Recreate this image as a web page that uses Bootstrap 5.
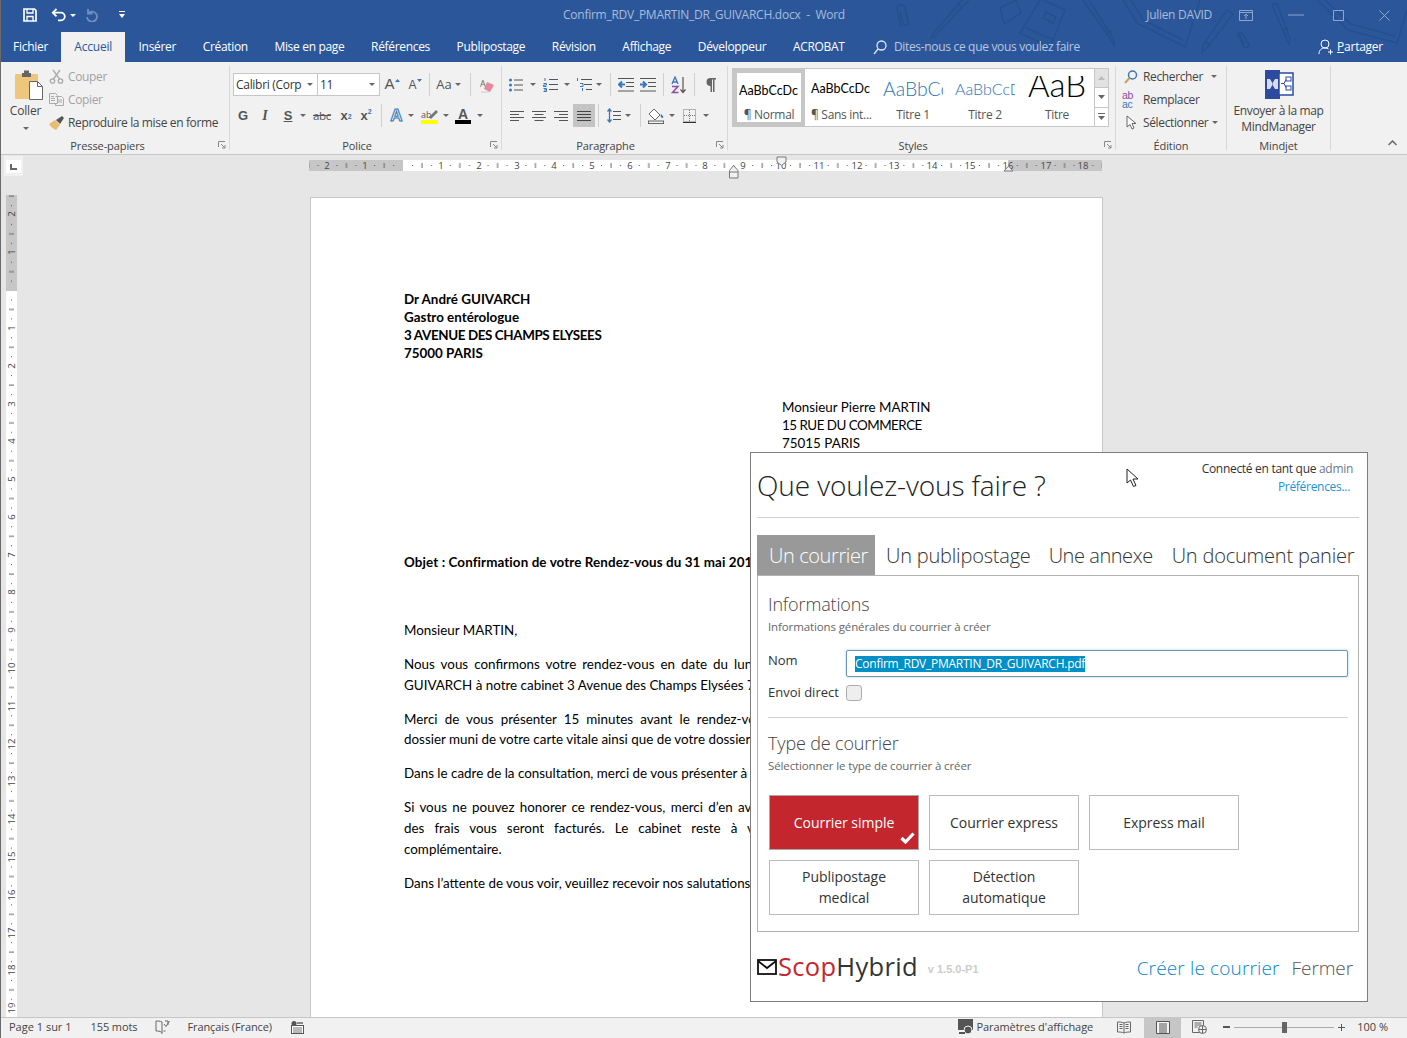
<!DOCTYPE html>
<html lang="fr"><head><meta charset="utf-8"><title>Word</title>
<link href="https://cdn.jsdelivr.net/npm/bootstrap@5.3.0/dist/css/bootstrap.min.css" rel="stylesheet">
<style>
html,body{margin:0;height:100%;overflow:hidden}
body{font-family:"Open Sans","Liberation Sans",sans-serif;font-size:11.5px;color:#444;background:#e6e6e6}
.app{width:1407px;height:1038px;border-left:1px solid #6a6a6a;position:relative;overflow:hidden}
.head{height:62px;background:#2b579a;position:relative;color:#fff}
.doodle{position:absolute;left:890px;top:0;width:516px;height:62px}
.tbar{height:30px;margin-bottom:2px;display:grid;grid-template-columns:1fr auto 1fr;align-items:center;position:relative}
.qat{padding-left:22px;gap:0}
.qu{margin-left:14px}.qr{margin-left:8px}.qc{margin-left:21px}
.wtitle{color:#a9bcd8;font-size:12px;letter-spacing:-.26px}
.wctl{color:#a9bcd8;font-size:12px}
.ntabs{height:30px;position:relative;flex-wrap:nowrap;align-items:stretch}
.ntabs .nav-link{color:#fff;font-size:12px;letter-spacing:-.32px;padding:5px 13.3px 0;height:30px;line-height:19px;border-radius:0;white-space:nowrap}
.ntabs .nav-link.first{padding:5px 13px 0 12px;letter-spacing:-.25px}
.ntabs .nav-link.active{background:#f1f1f1;color:#2b579a;padding:5px 13px 0;letter-spacing:-.2px;width:64px}
.tell{color:#b9c8e0;font-size:12px;letter-spacing:-.32px;margin-left:15px;gap:7px}
.share{margin-left:auto;margin-right:24px;font-size:12px;letter-spacing:-.25px;gap:4px;color:#fff}
.ribbon{height:93px;background:#f1f1f1;border-bottom:1px solid #c6c6c6;padding-top:4px;display:flex}
.rg{height:84px;border-right:1px solid #d8d8d8;display:flex;flex-direction:column;position:relative;flex:none}
.rb{height:73px;display:flex}
.rl{height:11px;line-height:14px;text-align:center;font-size:11px;color:#444;letter-spacing:-.1px}
.launch{position:absolute;right:3px;bottom:1px;width:8px;height:8px}
.g1{width:229px}.g2{width:272px}.g3{width:226px}.g4{width:388px}.g5{width:111px}.g6{width:104px}
.coller{width:48px;text-align:center;padding-left:1px;flex:none}
.coller div{line-height:16px;font-size:12px;letter-spacing:-.2px}
.coller svg{margin:3px 0 3px 12px}
.stk{margin-top:-1px}
.rb.stk{height:74px}
.cmd{height:23px;display:flex;align-items:center;white-space:nowrap;font-size:12px;letter-spacing:-.36px}
.cmd svg{flex:none}
.off{color:#a3a3a3}
.rows2{padding-top:7px;display:block}
.row1,.row2{height:23px;display:flex;align-items:center}
.row2{margin-top:8px}
.sl{display:flex;align-items:center;justify-content:center;flex:none;height:23px}
.sl svg{flex:none}
.car{width:0;height:0;border-left:3px solid transparent;border-right:3px solid transparent;border-top:3px solid #666;display:inline-block;flex:none}
.sep{width:1px;height:23px;background:#d0d0d0;display:block;flex:none}
.combo{height:23px;background:#fff;border:1px solid #c6c6c6;display:flex;align-items:center;justify-content:space-between;padding:0 4px 0 2px;font-size:12px;letter-spacing:-.3px;flex:none}
.w84{width:85px}.w62{width:63px;margin-left:-1px}
.w1{width:1px}.w2{width:2px}.w4{width:4px}.w6{width:6px}.w7{width:7px}.w8{width:8px}.w12{width:12px}.w14{width:14px}.w17{width:17px}.w18{width:18px}.w20{width:20px}.w22{width:22px}.w23{width:23px}.w24{width:24px}.w25{width:25px}.w26{width:26px}.w28{width:28px}.w30{width:30px}.w32{width:32px}
.ltr{font-family:"Liberation Sans",sans-serif;font-weight:700;color:#555;font-size:13px}
.ltr sub,.ltr sup{font-size:7px;color:#3a77b8}
.hl{background:#c4c4c4}
.gal{height:59px;display:flex;margin:2px 0 0 4px;background:#fff;border:1px solid #c6c6c6;width:377px;flex:none}
.gi{width:72px;flex:none;overflow:hidden;text-align:center;padding:0 6px;height:57px}
.gi.sel{outline:4px solid #c6c6c6;outline-offset:-4px;width:72px;padding-top:6px}
.smp{height:36px;margin-top:2px;display:flex;align-items:center;justify-content:flex-start;white-space:nowrap;overflow:hidden;font-family:Lato,sans-serif;color:#000;font-size:12.5px;width:60px}
.sel .smp{height:32px;margin-top:0}
.gl{font-size:12px;letter-spacing:-.3px;color:#555;line-height:14px;margin-top:1px;white-space:nowrap}
.smp.t1{color:#2e74b5;font-size:19.4px;font-weight:300}.smp.t2{color:#2e74b5;font-size:16px;font-weight:300}
.smp.t0{display:block;font-size:33px;font-weight:300;margin:7px 0 0 0;height:31px}
.t0 span{display:block;line-height:36px;margin-top:-10px}
.scr{width:14px;flex:none;margin-left:auto;border-left:1px solid #c6c6c6;background:#f1f1f1;display:flex;flex-direction:column}
.scr div{flex:1;border-bottom:1px solid #c6c6c6;background:#fff;display:flex;align-items:center;justify-content:center}
.scr div:first-child{background:#e2e2e2}
.scr div:last-child{border-bottom:0}
.work{height:862px;display:flex;flex-direction:column;background:#e6e6e6}
.rrow{height:40px;display:flex;flex:none}
.tabbox{width:19px;height:20px;margin:1px 0 0 3px;background:#f1f1f1;padding:4px 2px 2px;flex:none}
.tabbox div{background:#fff;height:13px;display:flex;align-items:center;justify-content:center}
.hrul{margin-left:286px;flex:none}
.wrow{flex:1;display:flex;overflow:hidden}
.vrul{margin-left:5px;flex:none}
.page{width:793px;margin:2px 0 0 293px;background:#fff;border:1px solid #c6c6c6;border-bottom:0;padding:92px 93px 0;font-family:Lato,"Liberation Sans",sans-serif;font-size:13.4px;color:#000;flex:none;height:900px}
.ad{line-height:18px;margin:0}
.caps{letter-spacing:-.38px}.caps2{letter-spacing:-.5px}
.dest{margin:36px 0 0 378px;line-height:18px}
.obj{margin-top:101px;font-weight:700;line-height:18px;white-space:nowrap;letter-spacing:.1px}
.par{line-height:20.9px;margin:12.9px 0 0}
.par div{text-align:justify;text-align-last:justify}
.par div.e{text-align-last:left;white-space:nowrap}
.dlg{position:absolute;left:749px;top:452px;width:618px;height:550px;background:#fff;border:1px solid #7d7d7d;padding:0 8px 0 6px;color:#333;z-index:5}
.dt{font-weight:300;font-size:28px;color:#222;line-height:36px;letter-spacing:-.1px;margin-top:-2px}
.dh{height:65px;border-bottom:1px solid #d0d0d0;display:flex;justify-content:space-between;padding:16px 0 0 0}
.who{font-size:12px;line-height:18px;text-align:right;padding-right:6px;margin-top:-9px;color:#333;letter-spacing:-.3px}
.who a{color:#6c7a89;text-decoration:none}.who a.p{color:#1a94d6;margin-right:3px}
.dtabs{margin-top:17px;flex-wrap:nowrap;height:40px;border:0}
.dtabs .nav-link{font-size:20px;font-weight:300;color:#333;padding:0 9px;line-height:41px;height:40px;border-radius:0;white-space:nowrap;letter-spacing:-.2px}
.dtabs .nav-link.active{background:#999;color:#fff;padding:0 0 0 12px;width:118px;margin-right:2px;letter-spacing:-.4px}
.dtabs .nav-link.ann{letter-spacing:-.45px;padding-right:10px}
.panel{border:1px solid #b3b3b3;height:357px;padding:0 10px}
.sh{font-weight:300;font-size:18px;color:#444;line-height:24px;margin:0;letter-spacing:-.15px;box-sizing:content-box}
.sh.a{padding-top:16px}.sh.b{padding-top:13px}
.ss{font-size:11.5px;color:#666;line-height:16px;letter-spacing:-.12px;font-weight:400;margin-top:3px}
.frow{display:flex;align-items:center;font-size:13px;color:#333;letter-spacing:0}
.fr1{margin-top:15px}.fr2{margin-top:6px}
.fl{width:78px;flex:none;white-space:nowrap}
.fr1 .fl{margin-top:-6px}
.nom{height:27px;width:502px;border:1px solid #6f95ad;border-radius:2px;box-shadow:0 0 3px #9fd8f0;padding:0 0 0 8px;display:flex;align-items:center;font-size:12px;background:#fff;color:#fff}
.nom span{background:#0090c8;line-height:16px;letter-spacing:-.25px}
.chk{width:16px;height:16px;margin:0;background:#eee;border:1px solid #aaa;border-radius:2px;flex:none}
.sep2{border-top:1px solid #d0d0d0;opacity:1;margin:14px 0 0}
.tiles{display:grid;grid-template-columns:repeat(3,150px);grid-auto-rows:55px;gap:10px;padding-left:1px;margin-top:21px}
.tiles .btn{border:1px solid #bbb;border-radius:0;background:#fff;color:#333;font-size:14px;line-height:21px;padding:0 10px;letter-spacing:-.05px;position:relative;display:flex;align-items:center;justify-content:center}
.tiles .btn.on{background:#c4262e;color:#fff;border-color:#a8a8a8}
.tick{position:absolute;right:3px;bottom:5px}
.dfoot{display:flex;align-items:center;height:69px}
.logo{font-size:25.5px;line-height:30px;font-weight:500;color:#333;margin:-2px 0 0 1px;letter-spacing:.3px}
.logo b{color:#c4262e;font-weight:500}
.ver{font-family:"Liberation Sans",sans-serif;font-weight:700;font-size:11px;color:#ccc;margin-left:10px;margin-top:5px}
.acts{margin-left:auto;font-size:19px;font-weight:300;padding:3px 6px 0 0;letter-spacing:-.15px}
.acts a{text-decoration:none;color:#0a86d0;letter-spacing:.15px}.acts a.f{color:#555;margin-left:12px;letter-spacing:-.1px}
.status{height:21px;background:#f1f1f1;border-top:1px solid #c6c6c6;display:flex;align-items:center;font-size:11px;color:#444;position:relative;padding:0 0 2px 8px}
.status .m{white-space:nowrap;flex:none}
.vw{width:37px;height:21px;background:#c6c6c6;display:flex;align-items:center;justify-content:center;margin:0 11px 0 13px}
.st2{margin-left:19px;letter-spacing:-.1px}.st3{margin-left:18px}.st4{margin-left:17px;letter-spacing:-.1px}.st5{margin-left:19px}
.st6{margin-left:auto}.st7{margin-left:1px;letter-spacing:-.06px}.st8{margin-left:24px}
.zm{width:7px;height:2px;background:#555;margin-left:16px;flex:none}
.zs{width:100px;height:1px;background:#aaa;margin-left:4px;flex:none;position:relative}
.zs i{position:absolute;left:48px;top:-5px;width:5px;height:11px;background:#666;display:block}
.st9{margin-left:4px}.st10{margin:0 19px 0 12px}
.cur{position:absolute;left:1125px;top:468px;z-index:6}
</style></head><body>
<div class="app">
<div class="head">
<svg class="doodle" viewBox="0 0 516 62" fill="none" stroke="#23508f" stroke-width="1.5"><path d="M10 27 6 10a4 4 0 0 1 8-2l3 14a2.500 2.500 0 0 1-5 1L9 11"/><path d="M71 0 42 34l-2 4 4-2L78 0M66 3l6 5"/><path d="M109 8l16-8M113 24l17-11-5-13M109 8l4 16"/><path d="M149 0l-20 33 30 14 15-37-22-10M135 28l28 12M155 12l10 5-3 6-10-5z"/><path d="M192 0l28 40 4 6-2-8-24-38M215 34l6-3"/><path d="M232 0l14 23 48 24L309 0M240 0l12 20 40 20"/><path d="M336 10l-24 35-1 7 5-4 26-34zM315 42l5 4"/><path d="M381 5l15 35 2 4 1-5-13-36zM392 30l5-2"/><path d="M346 33l7 14a3 3 0 0 0 5-2l-7-12a2 2 0 0 0-3 1l5 10"/><path d="M426 0l31 30 49 13 10-33M434 0l26 24 44 12"/></svg>
<div class="tbar">
<div class="qat d-flex align-items-center">
<svg width="14" height="14" viewBox="0 0 14 14" fill="none" stroke="#fff" stroke-width="1.7"><path d="M1 1h10.5L13 2.500V13H1z"/><path d="M4 1v4h6V1M4 13V8.500h6V13" stroke-width="1.300"/></svg>
<svg class="qu" width="15" height="14" viewBox="0 0 15 14" fill="none" stroke="#fff" stroke-width="1.8"><path d="M5.500 1 1.800 4.700l3.700 3.700M2 4.700h8a3.700 3.700 0 0 1 0 7.600H7"/></svg>
<span class="car ms-1" style="border-top-color:#fff"></span>
<svg class="qr" width="14" height="14" viewBox="0 0 14 14" fill="none" stroke="#6f8fbf" stroke-width="1.8"><path d="M4 1v4.500h4.500M4.500 5A5 5 0 1 1 3 9"/></svg>
<svg class="qc" width="6" height="8" viewBox="0 0 6 8" fill="#fff"><path d="M0 0h6v1H0zM0 3h6L3 7z"/></svg>
</div>
<div class="wtitle">Confirm_RDV_PMARTIN_DR_GUIVARCH.docx&nbsp; - &nbsp;Word</div>
<div class="wctl d-flex align-items-center justify-content-end">
<span style="margin-right:27px;letter-spacing:-.3px">Julien DAVID</span>
<svg width="14" height="11" viewBox="0 0 14 11" fill="none" stroke="#8fa6ca"><path d="M.5.500h13v10H.5zM.5 2.500h13M7 9V4.500M5 6l2-2 2 2"/></svg>
<svg style="margin-left:35px" width="16" height="2" viewBox="0 0 16 2" stroke="#8fa6ca"><path d="M0 1h16"/></svg>
<svg style="margin-left:29px" width="11" height="11" viewBox="0 0 11 11" fill="none" stroke="#8fa6ca"><path d="M.5.500h10v10H.5z"/></svg>
<svg style="margin:0 17px 0 35px" width="11" height="11" viewBox="0 0 11 11" fill="none" stroke="#8fa6ca"><path d="M.5.500l10 10M10.500.500l-10 10"/></svg>
</div></div>
<ul class="nav ntabs">
<li class="nav-item"><a class="nav-link first" href="#">Fichier</a></li>
<li class="nav-item"><a class="nav-link active" href="#">Accueil</a></li>
<li class="nav-item"><a class="nav-link" href="#">Insérer</a></li>
<li class="nav-item"><a class="nav-link" href="#">Création</a></li>
<li class="nav-item"><a class="nav-link" href="#">Mise en page</a></li>
<li class="nav-item"><a class="nav-link" href="#">Références</a></li>
<li class="nav-item"><a class="nav-link" href="#">Publipostage</a></li>
<li class="nav-item"><a class="nav-link" href="#">Révision</a></li>
<li class="nav-item"><a class="nav-link" href="#">Affichage</a></li>
<li class="nav-item"><a class="nav-link" href="#">Développeur</a></li>
<li class="nav-item"><a class="nav-link" href="#">ACROBAT</a></li>
<li class="tell d-flex align-items-center"><svg width="14" height="15" viewBox="0 0 14 15" fill="none" stroke="#dfe6f2" stroke-width="1.3"><circle cx="8.500" cy="5.500" r="4.500"/><path d="M5 9 1 14"/></svg>Dites-nous ce que vous voulez faire</li>
<li class="share d-flex align-items-center"><svg width="15" height="16" viewBox="0 0 15 16" fill="none" stroke="#fff"><circle cx="7" cy="5" r="4"/><path d="M1 15c0-4 2.500-6 6-6 1.500 0 2.500.3 3.500 1M10 13h5M12.500 10.500v5"/></svg><span><u>P</u>artager</span></li>
</ul>
</div>

<div class="ribbon">
<div class="rg g1">
<div class="rb">
<div class="coller">
<svg width="30" height="31" viewBox="0 0 30 31" class="d-block"><rect x="1" y="5" width="23" height="25" rx="1" fill="#efc77c"/><path d="M8 4h2V1.500h5V4h2v4H8z" fill="#666"/><path d="M15.500 12.500h8l5 5v13h-13z" fill="#fff" stroke="#666"/><path d="M23.500 12.500v5h5" fill="none" stroke="#666"/></svg>
<div>Coller</div><div style="line-height:14px"><span class="car"></span></div>
</div>
<div class="stk">
<div class="cmd off"><svg class="me-1" width="15" height="15" viewBox="0 0 15 15" fill="none" stroke="#aaa" stroke-width="1.300"><circle cx="3.500" cy="12" r="2.200"/><circle cx="11.500" cy="12" r="2.200"/><path d="M4.500 10 11 1M10.500 10 4 1"/></svg>Couper</div>
<div class="cmd off"><svg class="me-1" width="15" height="13" viewBox="0 0 15 13" fill="none" stroke="#aaa"><path d="M.5.500h6l2 2v8h-8zM6.500 3.500h6l2 2v7h-8v-2M2 3.500h3M2 5.500h4M2 7.500h4M8 7h5M8 9h5"/></svg>Copier</div>
<div class="cmd"><svg class="me-1" width="15" height="15" viewBox="0 0 15 15"><path d="M0 9l6-4 5 5-4 5c-3-1-5-3-7-6z" fill="#e7bd72"/><path d="M7 5l4 4 4-6-2-2z" fill="#555"/></svg>Reproduire la mise en forme</div>
</div></div>
<div class="rl" style="padding-right:15px">Presse-papiers</div>
<svg class="launch" viewBox="0 0 8 8" fill="none" stroke="#888"><path d="M.5 6V.500H7M3 3l4 4M7 4v3H4"/></svg>
</div>

<div class="rg g2">
<div class="rb rows2" style="padding-left:3px">
<div class="row1">
<div class="combo w84"><span style="color:#333">Calibri (Corp</span><span class="car"></span></div>
<div class="combo w62"><span style="color:#333">11</span><span class="car"></span></div>
<span class="sl w24 ltr" style="font-weight:400;font-size:15px;color:#555">A<svg width="5" height="3" viewBox="0 0 5 3" class="mb-2"><path d="M0 3l2.500-3L5 3z" fill="#3a77b8"/></svg></span>
<span class="sl w22 ltr" style="font-weight:400;font-size:12px;color:#555">A<svg width="5" height="3" viewBox="0 0 5 3" class="mb-2"><path d="M0 0l2.500 3L5 0z" fill="#3a77b8"/></svg></span>
<span class="sl w7"><i class="sep"></i></span>
<span class="sl w22" style="font-size:13px;color:#555">Aa</span>
<span class="sl w6"><span class="car"></span></span>
<span class="sl w18"><i class="sep"></i></span>
<span class="sl w17"><svg width="16" height="16" viewBox="0 0 16 16"><text x="0" y="10" font-size="9" font-family="Open Sans,sans-serif" fill="#666">A</text><path d="M7 5l7 3-4 7-6-3z" fill="#e58a9a"/><path d="M1 15h8" stroke="#ccc"/></svg></span>
</div>
<div class="row2">
<span class="sl w20 ltr">G</span>
<span class="sl w24 ltr" style="font-style:italic;font-family:'Liberation Serif',serif;font-size:14px">I</span>
<span class="sl w22 ltr"><u>S</u></span>
<span class="sl w8"><span class="car"></span></span>
<span class="sl w30" style="font-size:11.500px;color:#555;letter-spacing:-.3px"><s>abc</s></span>
<span class="sl w18 ltr">x<sub>2</sub></span>
<span class="sl w22 ltr">x<sup>2</sup></span>
<span class="sl w8"><i class="sep"></i></span>
<span class="sl w23 ltr" style="color:#dfeaf6;font-size:17px;-webkit-text-stroke:1px #3a77b8">A</span>
<span class="sl w6"><span class="car"></span></span>
<span class="sl w30"><svg width="17" height="16" viewBox="0 0 17 16"><text x="0" y="10" font-size="9" font-family="Open Sans,sans-serif" fill="#555">ab</text><path d="M8 9l7-7 2 2-7 7z" fill="#777"/><rect y="12" width="17" height="4" fill="#ff0"/></svg></span>
<span class="sl w4"><span class="car"></span></span>
<span class="sl w30 flex-column" style="line-height:11px;height:23px;font-family:'Liberation Sans',sans-serif;font-weight:700;font-size:14px;color:#555;padding-top:2px">A<i class="d-block" style="width:16px;height:4px;background:#000"></i></span>
<span class="sl w4"><span class="car"></span></span>
</div></div>
<div class="rl" style="padding-right:17px">Police</div>
<svg class="launch" viewBox="0 0 8 8" fill="none" stroke="#888"><path d="M.5 6V.500H7M3 3l4 4M7 4v3H4"/></svg>
</div>

<div class="rg g3">
<div class="rb rows2" style="padding-left:3px">
<div class="row1">
<span class="sl w22"><svg width="14" height="14" viewBox="0 0 14 14" stroke="#555"><circle cx="1.500" cy="2" r="1.500" fill="#3a77b8" stroke="none"/><circle cx="1.500" cy="7" r="1.500" fill="#3a77b8" stroke="none"/><circle cx="1.500" cy="12" r="1.500" fill="#3a77b8" stroke="none"/><path d="M5 2h9M5 7h9M5 12h9"/></svg></span>
<span class="sl w12"><span class="car"></span></span>
<span class="sl w22"><svg width="15" height="15" viewBox="0 0 15 15" stroke="#555" fill="none"><path d="M6 2.500h9M6 7.500h9M6 12.500h9"/><path d="M2 1v3M.5 6.500h3v1.500h-3v1.500h3M.5 11.500h3v3h-3M1 13h2" stroke="#3a77b8"/></svg></span>
<span class="sl w12"><span class="car"></span></span>
<span class="sl w22"><svg width="16" height="15" viewBox="0 0 16 15" stroke="#555" fill="none"><path d="M5 2.500h11M8 7.500h8M10 12.500h6"/><path d="M1.500 1v3M4 6.500h3v3H4M6.500 11v3" stroke="#3a77b8"/></svg></span>
<span class="sl w8"><span class="car"></span></span>
<span class="sl w14"><i class="sep"></i></span>
<span class="sl w18"><svg width="16" height="14" viewBox="0 0 16 14" stroke="#555" fill="none"><path d="M0 .500h16M8 4.500h8M8 8.500h8M0 13h16"/><path d="M7 6.500H1M4 3.500l-3 3 3 3" stroke="#3a77b8" stroke-width="2"/></svg></span>
<span class="sl w26"><svg width="16" height="14" viewBox="0 0 16 14" stroke="#555" fill="none"><path d="M0 .500h16M8 4.500h8M8 8.500h8M0 13h16"/><path d="M0 6.500h6M3 3.500l3 3-3 3" stroke="#3a77b8" stroke-width="2"/></svg></span>
<span class="sl w4"><i class="sep"></i></span>
<span class="sl w28"><svg width="16" height="18" viewBox="0 0 16 18" fill="none"><path d="M1 8 4 1l3 7M2 6h4" stroke="#3a77b8" stroke-width="1.300"/><path d="M1 10.500h6L1.500 16.500h6" stroke="#8a4fa8" stroke-width="1.500"/><path d="M12 1v15M9.500 13.500 12 16.500l2.500-3" stroke="#555" stroke-width="1.200"/></svg></span>
<span class="sl w2"><i class="sep"></i></span>
<span class="sl w30"><svg width="11" height="14" viewBox="0 0 11 14" fill="#666"><path d="M5 0h6v1.500H9.500V14H8V1.500H7V14H5.500V8a4 4 0 0 1 0-8z"/></svg></span>
</div>
<div class="row2">
<span class="sl w24"><svg width="14" height="10" viewBox="0 0 14 10" stroke="#555"><path d="M0 .500h14M0 3.500h9M0 6.500h14M0 9.500h9"/></svg></span>
<span class="sl w20"><svg width="14" height="10" viewBox="0 0 14 10" stroke="#555"><path d="M0 .500h14M2.500 3.500h9M0 6.500h14M2.500 9.500h9"/></svg></span>
<span class="sl w24"><svg width="14" height="10" viewBox="0 0 14 10" stroke="#555"><path d="M0 .500h14M5 3.500h9M0 6.500h14M5 9.500h9"/></svg></span>
<span class="sl w22 hl"><svg width="14" height="10" viewBox="0 0 14 10" stroke="#444"><path d="M0 .500h14M0 3.500h14M0 6.500h14M0 9.500h14"/></svg></span>
<span class="sl w6"><i class="sep"></i></span>
<span class="sl w25"><svg width="14" height="15" viewBox="0 0 14 15" fill="none"><path d="M6 3.500h8M6 7.500h8M6 11.500h8" stroke="#555"/><path d="M2.500 1v13M.5 3.500l2-2.500 2 2.500M.5 11.500l2 2.500 2-2.500" stroke="#3a77b8" stroke-width="1.300"/></svg></span>
<span class="sl w4"><span class="car"></span></span>
<span class="sl w20"><i class="sep"></i></span>
<span class="sl w12"><svg width="17" height="16" viewBox="0 0 17 16" fill="none" stroke="#666"><path d="M6 1l6 6-5 5-6-6z" fill="#fff"/><path d="M13 6c2 2 3 3 2 4-2 0-3-2-2-4z" fill="#3a77b8" stroke="none"/><rect x=".5" y="13" width="15" height="2.500"/></svg></span>
<span class="sl w20"><span class="car"></span></span>
<span class="sl w14"><svg width="13" height="14" viewBox="0 0 13 14" stroke="#777" stroke-dasharray="1 1" fill="none"><path d="M.5.500h12v12H.5zM6.500 1v11M1 6.500h11"/><path d="M0 13.500h13" stroke="#333" stroke-dasharray="none"/></svg></span>
<span class="sl w20"><span class="car"></span></span>
</div></div>
<div class="rl" style="padding-right:18px">Paragraphe</div>
<svg class="launch" viewBox="0 0 8 8" fill="none" stroke="#888"><path d="M.5 6V.500H7M3 3l4 4M7 4v3H4"/></svg>
</div>

<div class="rg g4">
<div class="rb">
<div class="gal">
<div class="gi sel"><div class="smp">AaBbCcDc</div><div class="gl">¶ Normal</div></div>
<div class="gi"><div class="smp">AaBbCcDc</div><div class="gl">¶ Sans int...</div></div>
<div class="gi"><div class="smp t1">AaBbCc</div><div class="gl">Titre 1</div></div>
<div class="gi"><div class="smp t2">AaBbCcD</div><div class="gl">Titre 2</div></div>
<div class="gi"><div class="smp t0"><span>AaB</span></div><div class="gl">Titre</div></div>
<div class="scr"><div><svg width="7" height="4" viewBox="0 0 7 4" fill="#bbb"><path d="M0 4l3.500-4L7 4z"/></svg></div><div><svg width="7" height="4" viewBox="0 0 7 4" fill="#666"><path d="M0 0l3.500 4L7 0z"/></svg></div><div><svg width="7" height="7" viewBox="0 0 7 7" fill="#666"><path d="M0 0h7v1H0zM0 3h7L3.500 7z"/></svg></div></div>
</div></div>
<div class="rl" style="padding-right:17px">Styles</div>
<svg class="launch" viewBox="0 0 8 8" fill="none" stroke="#888"><path d="M.5 6V.500H7M3 3l4 4M7 4v3H4"/></svg>
</div>

<div class="rg g5">
<div class="rb d-block stk" style="padding-left:8px">
<div class="cmd"><svg style="margin-right:5px" width="14" height="14" viewBox="0 0 14 14" fill="none"><circle cx="8.500" cy="5" r="4" stroke="#3a77b8" stroke-width="1.500"/><path d="M5.500 8 1 13" stroke="#c9a25a" stroke-width="2"/></svg>Rechercher<span class="car ms-2"></span></div>
<div class="cmd"><span style="width:21px;font-size:10.500px;font-family:'Liberation Sans',sans-serif;line-height:8.500px;color:#8a4fa8;letter-spacing:-.3px;margin-left:-2px;display:block;flex:none">ab<br><span style="color:#3a77b8">ac</span></span>Remplacer</div>
<div class="cmd"><svg style="margin:0 5px 0 2px" width="12" height="15" viewBox="0 0 12 15" fill="#fff" stroke="#666"><path d="M1 1v11l3-2.500 2 4.500 2-1-2-4.500h4z"/></svg>Sélectionner<span class="car ms-1"></span></div>
</div>
<div class="rl">Édition</div></div>

<div class="rg g6">
<div class="rb flex-column align-items-center">
<svg width="30" height="30" viewBox="0 0 30 30" class="d-block flex-shrink-0" style="margin-top:3px"><rect x="1" y="1" width="15" height="29" fill="#2c4aa0"/><rect x="15" y="4" width="14" height="22" fill="#fff" stroke="#2c4aa0" stroke-width="1.500"/><path d="M3 10h3l3 5-3 5H3zM14 10h-3l-3 5 3 5h3z" fill="#d8dce8"/><g fill="none" stroke="#2c4aa0"><rect x="22" y="8" width="5" height="4"/><rect x="22" y="17" width="5" height="4"/><path d="M17 14.500h3l2-4M20 14.500l2 4"/></g></svg>
<div class="text-center" style="font-size:12px;line-height:16px;letter-spacing:-.35px;margin-top:4px;white-space:nowrap">Envoyer à la map<br>MindManager</div>
</div>
<div class="rl">Mindjet</div></div>
<div class="ms-auto d-flex align-items-end" style="height:84px;padding:0 10px 4px 0"><svg width="9" height="6" viewBox="0 0 9 6" fill="none" stroke="#666" stroke-width="1.500"><path d="M.5 5l4-4 4 4"/></svg></div>
</div>

<div class="work">
<div class="rrow">
<div class="tabbox"><div><svg width="7" height="6" viewBox="0 0 7 6" fill="#666"><path d="M0 0h2v4h5v2H0z"/></svg></div></div>
<svg class="hrul" width="796" height="26" viewBox="0 0 796 26" font-family="Open Sans,sans-serif" font-size="9.500" fill="#444" text-anchor="middle">
<defs><pattern id="tk" x="18.400" y="0" width="37.800" height="26" patternUnits="userSpaceOnUse"><rect x="9" y="10" width="1" height="1" fill="#555"/><rect x="18.500" y="8" width="1" height="5" fill="#666"/><rect x="28" y="10" width="1" height="1" fill="#555"/></pattern></defs>
<rect x="0" y="5" width="94" height="11" fill="#c6c6c6"/><rect x="94" y="5" width="605" height="11" fill="#fff"/><rect x="699" y="5" width="94" height="11" fill="#c6c6c6"/>
<rect x="0" y="5" width="793" height="11" fill="url(#tk)"/>
<g><text x="18" y="14">2</text><text x="56" y="14">1</text><text x="132" y="14">1</text><text x="170" y="14">2</text><text x="208" y="14">3</text><text x="245" y="14">4</text><text x="283" y="14">5</text><text x="321" y="14">6</text><text x="359" y="14">7</text><text x="396" y="14">8</text><text x="434" y="14">9</text><text x="472" y="14">10</text><text x="510" y="14">11</text><text x="548" y="14">12</text><text x="585" y="14">13</text><text x="623" y="14">14</text><text x="661" y="14">15</text><text x="699" y="14">16</text><text x="737" y="14">17</text><text x="774" y="14">18</text></g>
<path d="M424.500 10.500l-4 5v7.500h8.500v-7.500zM420.500 17h8.500" fill="#f1f1f1" stroke="#777"/>
<path d="M468 2h9v5l-4.500 3.500L468 7z" fill="#f1f1f1" stroke="#777"/>
<path d="M699.500 11l-4.500 5h9z" fill="#f1f1f1" stroke="#777"/>
</svg>
</div>
<div class="wrow">
<svg class="vrul" width="11" height="822" viewBox="0 0 11 822" font-family="Open Sans,sans-serif" font-size="9.500" fill="#444" text-anchor="middle">
<defs><pattern id="vk" x="0" y="19.900" width="11" height="37.800" patternUnits="userSpaceOnUse"><rect x="5" y="9" width="1" height="1" fill="#555"/><rect x="3" y="18.500" width="5" height="1" fill="#666"/><rect x="5" y="28" width="1" height="1" fill="#555"/></pattern></defs>
<rect width="11" height="96" fill="#c6c6c6"/><rect y="96" width="11" height="726" fill="#fff"/>
<rect width="11" height="822" fill="url(#vk)"/>
<g><text transform="translate(9,19) rotate(-90)">2</text><text transform="translate(9,57) rotate(-90)">1</text><text transform="translate(9,133) rotate(-90)">1</text><text transform="translate(9,171) rotate(-90)">2</text><text transform="translate(9,209) rotate(-90)">3</text><text transform="translate(9,246) rotate(-90)">4</text><text transform="translate(9,284) rotate(-90)">5</text><text transform="translate(9,322) rotate(-90)">6</text><text transform="translate(9,360) rotate(-90)">7</text><text transform="translate(9,397) rotate(-90)">8</text><text transform="translate(9,435) rotate(-90)">9</text><text transform="translate(9,473) rotate(-90)">10</text><text transform="translate(9,511) rotate(-90)">11</text><text transform="translate(9,549) rotate(-90)">12</text><text transform="translate(9,586) rotate(-90)">13</text><text transform="translate(9,624) rotate(-90)">14</text><text transform="translate(9,662) rotate(-90)">15</text><text transform="translate(9,700) rotate(-90)">16</text><text transform="translate(9,738) rotate(-90)">17</text><text transform="translate(9,775) rotate(-90)">18</text><text transform="translate(9,813) rotate(-90)">19</text></g>
</svg>
<div class="page">
<p class="ad fw-bold">Dr André GUIVARCH<br>Gastro entérologue<br><span class="caps">3 AVENUE DES CHAMPS ELYSEES</span><br>75000 PARIS</p>
<p class="dest">Monsieur Pierre MARTIN<br><span class="caps2">15 RUE DU COMMERCE</span><br>75015 PARIS</p>
<div class="obj">Objet : Confirmation de votre Rendez-vous du 31 mai 2016</div>
<p class="par" style="margin-top:49px"><span class="d-block">Monsieur MARTIN,</span></p>
<div class="par"><div>Nous vous confirmons votre rendez-vous en date du lundi 31 mai 2016 à 14h30 avec le Docteur</div><div class="e">GUIVARCH à notre cabinet 3 Avenue des Champs Elysées 75000 Paris.</div></div>
<div class="par"><div>Merci de vous présenter 15 minutes avant le rendez-vous pour la constitution de votre dossier,</div><div class="e">dossier muni de votre carte vitale ainsi que de votre dossier médical.</div></div>
<div class="par"><div class="e">Dans le cadre de la consultation, merci de vous présenter à jeun.</div></div>
<div class="par"><div>Si vous ne pouvez honorer ce rendez-vous, merci d’en avertir le cabinet 48 heures à l’avance, sinon</div><div>des frais vous seront facturés. Le cabinet reste à votre disposition pour toute information</div><div class="e">complémentaire.</div></div>
<div class="par"><div class="e">Dans l’attente de vous voir, veuillez recevoir nos salutations distinguées.</div></div>
</div>
</div>
</div>

<div class="status">
<span class="m">Page 1 sur 1</span><span class="m st2">155 mots</span>
<svg class="flex-shrink-0 st3" width="15" height="14" viewBox="0 0 15 14" fill="none" stroke="#666"><path d="M7 2C5 1 3 1 1 1v10c2 0 4 0 6 1.500V2zM7 12.500V14M8.500 11h2M10 1h3v4"/><path d="M9 4l2 2.500L14.500 1" stroke="#666"/></svg>
<span class="m st4">Français (France)</span>
<svg class="flex-shrink-0 st5" width="13" height="13" viewBox="0 0 13 13"><circle cx="3" cy="2.500" r="2.500" fill="#555"/><rect x=".5" y="4.500" width="12" height="8" fill="#fff" stroke="#555"/><path d="M2 7h9M2 9h9M2 11h9" stroke="#777"/><path d="M6 1h6v2H6z" fill="#888"/></svg>
<svg class="flex-shrink-0 st6" width="17" height="16" viewBox="0 0 17 16"><rect y="0" width="15" height="11" fill="#555"/><circle cx="10" cy="11" r="4" fill="#555" stroke="#f1f1f1"/><path d="M1 14h6" stroke="#555" stroke-width="2"/></svg>
<span class="m st7">Paramètres d'affichage</span>
<svg class="flex-shrink-0 st8" width="14" height="13" viewBox="0 0 14 13" fill="none" stroke="#666"><path d="M7 2C5 1 2 1 .5 1v10c2 0 4.500 0 6.500 1 2-1 4.500-1 6.500-1V1C12 1 9 1 7 2zM7 2v10M2.500 3.500h3M2.500 5.500h3M2.500 7.500h3M8.500 3.500h3M8.500 5.500h3M8.500 7.500h3"/></svg>
<span class="vw"><svg width="14" height="13" viewBox="0 0 14 13" fill="#f3f3f3" stroke="#555"><path d="M.5.500h13v12H.5zM3 3h8M3 5h8M3 7h8M3 9h8M3 11h8"/></svg></span>
<svg class="flex-shrink-0" width="15" height="14" viewBox="0 0 15 14" fill="none" stroke="#666"><path d="M.5.500h11v12H.5zM2.500 3h7M2.500 5h7M2.500 7h3"/><circle cx="10.500" cy="9.500" r="4" fill="#f1f1f1"/><path d="M7 9.500h7M10.500 6v7"/></svg>
<span class="zm"></span>
<span class="zs"><i></i></span>
<svg class="flex-shrink-0 st9" width="7" height="7" viewBox="0 0 7 7" fill="#555"><path d="M0 3h7v1H0zM3 0h1v7H3z"/></svg>
<span class="m st10">100 %</span>
</div>

<div class="dlg">
<div class="dh"><div class="dt">Que voulez-vous faire ?</div>
<div class="who">Connecté en tant que <a href="#">admin</a><br><a class="p" href="#">Préférences...</a></div></div>
<ul class="nav dtabs">
<li class="nav-item"><a class="nav-link active" href="#">Un courrier</a></li>
<li class="nav-item"><a class="nav-link" href="#">Un publipostage</a></li>
<li class="nav-item"><a class="nav-link ann" href="#">Une annexe</a></li>
<li class="nav-item"><a class="nav-link" href="#">Un document panier</a></li>
</ul>
<div class="panel">
<h5 class="sh a">Informations</h5>
<div class="ss">Informations générales du courrier à créer</div>
<div class="frow fr1"><label class="fl">Nom</label><div class="nom"><span>Confirm_RDV_PMARTIN_DR_GUIVARCH.pdf</span></div></div>
<div class="frow fr2"><label class="fl">Envoi direct</label><input class="form-check-input chk" type="checkbox" aria-label="Envoi direct"></div>
<hr class="sep2">
<h5 class="sh b">Type de courrier</h5>
<div class="ss">Sélectionner le type de courrier à créer</div>
<div class="tiles">
<button class="btn on" type="button">Courrier simple<svg class="tick" width="15" height="12" viewBox="0 0 15 12" fill="none" stroke="#fff" stroke-width="3.200"><path d="M1.500 6l4 4 8-8.500"/></svg></button>
<button class="btn" type="button">Courrier express</button>
<button class="btn" type="button">Express mail</button>
<button class="btn" type="button">Publipostage medical</button>
<button class="btn" type="button">Détection automatique</button>
</div>
</div>
<div class="dfoot">
<svg width="20" height="16" viewBox="0 0 20 16" fill="none" stroke="#111" stroke-width="1.800"><rect x="1" y="1" width="18" height="14"/><path d="M1 2l9 7 9-7"/></svg>
<span class="logo"><b>Scop</b>Hybrid</span><span class="ver">v 1.5.0-P1</span>
<div class="acts"><a href="#">Créer le courrier</a><a class="f" href="#">Fermer</a></div>
</div>
</div>
<svg class="cur" width="15" height="20" viewBox="0 0 15 20" fill="#fff" stroke="#222"><path d="M1 1v14l3.500-3 3 6.500 2.500-1-3-6.500h5z"/></svg>
</div>
</body></html>
